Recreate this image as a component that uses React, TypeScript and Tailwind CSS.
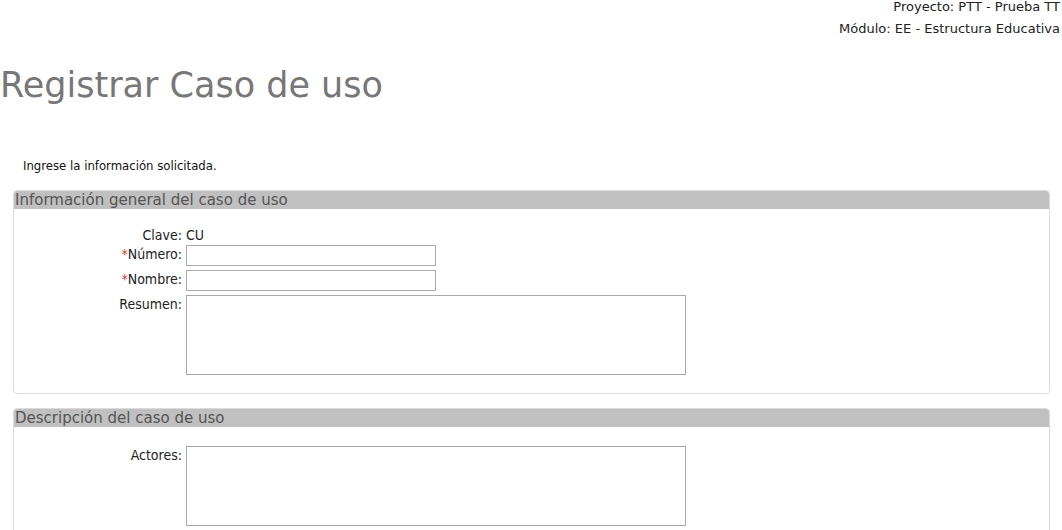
import React from "react";

const SANS = "font-['DejaVu_Sans',Verdana,sans-serif]";
const NARROW = "font-['DejaVu_Sans_Condensed','Liberation_Sans',sans-serif]";

function Section({ title, children }: { title: string; children: React.ReactNode }) {
  return (
    <div className="mx-[13px] w-[1037px] rounded-[4px] border border-[#dcdcdc] overflow-hidden">
      <div className={`${SANS} h-[18px] bg-[#c0c0c0] px-px text-[15px] leading-[18px] text-[#555]`}>{title}</div>
      <div className={`${NARROW} grid grid-cols-[168px_auto] gap-x-[4px] items-start text-[14px] text-[#222]`}>
        {children}
      </div>
    </div>
  );
}

function Label({ text, required }: { text: string; required?: boolean }) {
  return (
    <div className="text-right leading-[17px] pt-[1px]">
      {required && <span className="text-[#d0402b]">*</span>}
      {text}
    </div>
  );
}

export default function App() {
  return (
    <div className="w-[1062px] h-[530px] overflow-hidden bg-white">
      <div className={`${SANS} text-right pr-[2px] text-[13px] leading-[22px] text-[#222] -mt-[4px]`}>
        <div>Proyecto: PTT - Prueba TT</div>
        <div>Módulo: EE - Estructura Educativa</div>
      </div>
      <h1 className={`${SANS} mt-[24px] text-[35px] leading-[42px] text-[#777]`}>Registrar Caso de uso</h1>
      <p className={`${NARROW} mt-[52px] ml-[23px] text-[13px] leading-[16px] text-[#111]`}>Ingrese la información solicitada.</p>
      <div className="mt-[16px]">
        <Section title="Información general del caso de uso">
          <div className="col-span-2 h-[17px]" />
          <Label text="Clave:" />
          <div className="leading-[17px] pt-[1px] h-[19px]">CU</div>
          <Label text="Número:" required />
          <input className="h-[21px] w-[250px] border border-[#a9a9a9]" />
          <div className="col-span-2 h-[4px]" />
          <Label text="Nombre:" required />
          <input className="h-[21px] w-[250px] border border-[#a9a9a9]" />
          <div className="col-span-2 h-[4px]" />
          <Label text="Resumen:" />
          <textarea className="h-[80px] w-[500px] resize-none border border-[#a9a9a9]" />
          <div className="col-span-2 h-[18px]" />
        </Section>
      </div>
      <div className="mt-[14px]">
        <Section title="Descripción del caso de uso">
          <div className="col-span-2 h-[19px]" />
          <Label text="Actores:" />
          <textarea className="h-[80px] w-[500px] resize-none border border-[#a9a9a9]" />
          <div className="col-span-2 h-[17px]" />
        </Section>
      </div>
    </div>
  );
}
